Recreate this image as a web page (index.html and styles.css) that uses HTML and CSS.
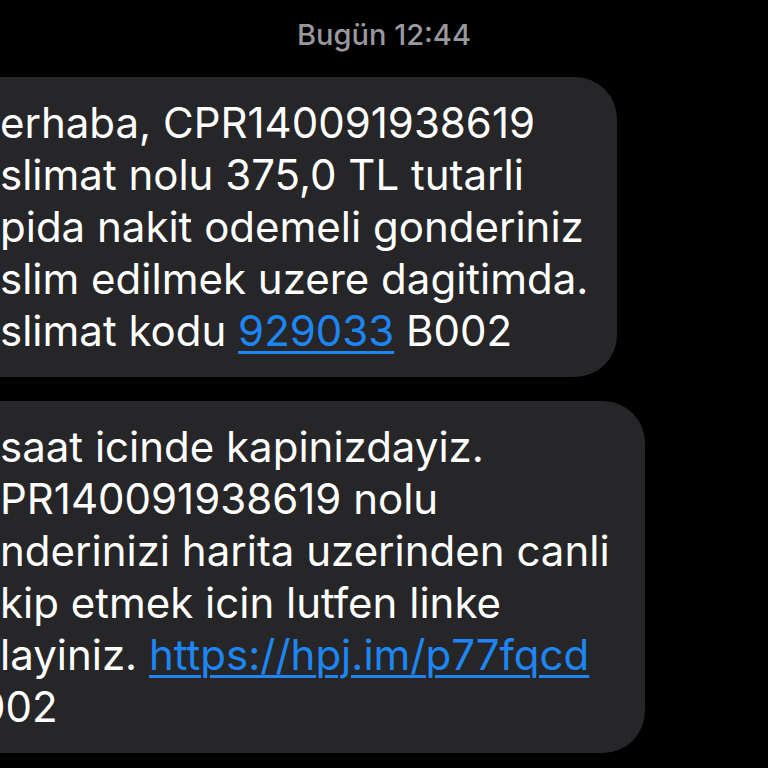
FILE: index.html
```html
<!DOCTYPE html>
<html lang="tr">
<head>
<meta charset="utf-8">
<title>Mesajlar</title>
<link rel="stylesheet" href="styles.css">
</head>
<body>
<div class="screen">
  <div class="date">Bugün 12:44</div>
  <div class="thread">
    <div class="bubble bubble-first">
      <span class="line">erhaba, CPR140091938619</span>
      <span class="line">slimat nolu 375,0 TL tutarli</span>
      <span class="line">pida nakit odemeli gonderiniz</span>
      <span class="line">slim edilmek uzere dagitimda.</span>
      <span class="line">slimat kodu <a class="link" href="#">929033</a> B002</span>
    </div>
    <div class="bubble bubble-second">
      <span class="line">saat icinde kapinizdayiz.</span>
      <span class="line">PR140091938619 nolu</span>
      <span class="line">nderinizi harita uzerinden canli</span>
      <span class="line">kip etmek icin lutfen linke</span>
      <span class="line">layiniz. <a class="link" href="#">https://hpj.im/p77fqcd</a></span>
      <span class="line line-cut">002</span>
    </div>
  </div>
</div>
</body>
</html>
```
FILE: styles.css
```css
html, body {
  margin: 0;
  padding: 0;
  background: #000;
}
.screen {
  width: 768px;
  height: 768px;
  overflow: hidden;
  background: #000;
  font-family: Inter, "Noto Sans", "Liberation Sans", sans-serif;
}
.date {
  padding-top: 17px;
  text-align: center;
  font-size: 29px;
  line-height: 36px;
  font-weight: 500;
  color: #98989e;
}
.thread {
  display: flex;
  flex-direction: column;
  align-items: flex-start;
  gap: 24px;
  margin-top: 24px;
}
.bubble {
  display: flex;
  flex-direction: column;
  margin-left: -44px;
  padding: 20px 0 20px 44px;
  background: #262628;
  border-radius: 42px;
  color: #fff;
  font-size: 42px;
  line-height: 52px;
  white-space: nowrap;
}
.bubble-first {
  width: 617px;
}
.bubble-second {
  width: 645px;
}
.line {
  display: block;
}
.line-cut {
  margin-left: -21px;
}
.link {
  color: #1d86f4;
  text-decoration: underline;
  text-decoration-thickness: 3px;
  text-underline-offset: 5px;
}
```
